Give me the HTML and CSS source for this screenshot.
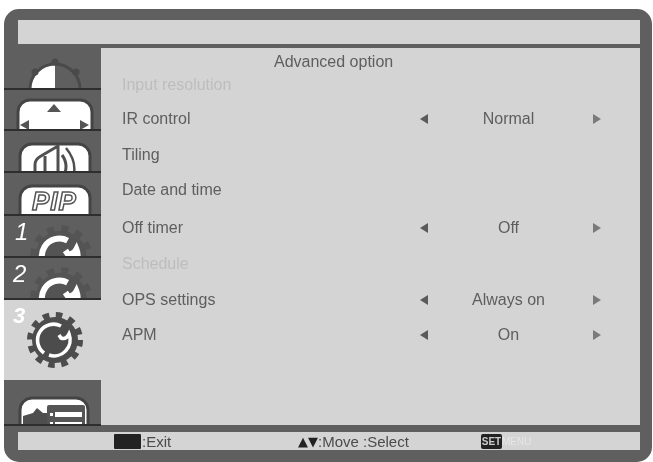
FILE: index.html
```html
<!DOCTYPE html>
<html lang="en">
  <head>
    <meta charset="UTF-8" />
    <meta name="viewport" content="width=device-width, initial-scale=1.0" />
    <title>Advanced option</title>
    <link rel="stylesheet" href="styles.css">
  </head>
  <body>
    <svg class="defs" width="0" height="0">
      <!-- gear body: dashed ring makes the teeth -->
      <symbol id="gear" viewBox="0 0 60 60">
        <circle class="gear-body" cx="30" cy="30" r="23" />
        <circle class="gear-teeth" cx="30" cy="30" r="25" stroke-dasharray="6.5 6.6" />
        <g class="wrench">
          <path d="M36 16A16 16 0 0 0 19 43" />
          <path d="M24 45A16 16 0 0 0 44 24q-3 6-8 4l-2-3" />
        </g>
      </symbol>
    </svg>
    <div class="osd">
      <div class="title-bar"></div>
      <div class="main">
        <div class="sidebar">
          <div class="tab tab-1">
            <svg class="icon" width="96" height="40" viewBox="0 0 96 40">
              <path d="M26 41a25 25 0 0 1 25-25v25z" fill="#fff" />
              <path d="M26 41a25 25 0 0 1 50 0" fill="none" stroke="#4a4a4a" stroke-width="3" />
              <circle cx="51" cy="14" r="3.5" fill="#4a4a4a" />
              <circle cx="31" cy="24" r="3.5" fill="#4a4a4a" />
              <circle cx="72" cy="24" r="3.5" fill="#4a4a4a" />
            </svg>
          </div>
          <div class="tab tab-2">
            <svg class="icon" width="96" height="40" viewBox="0 0 96 40">
              <rect x="14" y="10" width="74" height="50" rx="12" fill="#fff" stroke="#444" stroke-width="3" />
              <path d="M50 14l7 8h-14z M16 35l9-5v10z M85 35l-9-5v10z" fill="#555" />
            </svg>
          </div>
          <div class="tab tab-3">
            <svg class="icon" width="96" height="41" viewBox="0 0 96 41">
              <rect x="16" y="13" width="70" height="50" rx="12" fill="#fff" stroke="#444" stroke-width="3" />
              <g fill="none" stroke="#505050" stroke-width="3">
                <path d="M31 42v-8q0-6 6-9l17-10v27" />
                <path d="M41 42v-17" />
                <path d="M58 24q6 8 3 18" />
                <path d="M62 17q10 12 8 25" stroke-width="2.5" />
              </g>
            </svg>
          </div>
          <div class="tab tab-4">
            <svg class="icon" width="96" height="42" viewBox="0 0 96 42">
              <rect x="16" y="13" width="70" height="50" rx="12" fill="#fff" stroke="#444" stroke-width="3" />
            </svg>
            <span class="pip">PIP</span>
          </div>
          <div class="tab tab-5">
            <span class="num">1</span>
            <svg class="gear" width="66" height="66"><use href="#gear" width="66" height="66" /></svg>
          </div>
          <div class="tab tab-6">
            <span class="num">2</span>
            <svg class="gear" width="66" height="66"><use href="#gear" width="66" height="66" /></svg>
          </div>
          <div class="tab tab-7 active">
            <span class="num">3</span>
            <svg class="gear" width="60" height="60"><use href="#gear" width="60" height="60" /></svg>
          </div>
          <div class="tab tab-8">
            <svg class="icon" width="96" height="44" viewBox="0 0 96 44">
              <rect x="16" y="18" width="68" height="50" rx="12" fill="#fff" stroke="#444" stroke-width="3" />
              <path d="M19 45v-9l10-3 4-5 6 5h4v12z" fill="#4e4e4e" />
              <rect x="43" y="25" width="38" height="24" rx="2" fill="#555" />
              <rect x="51" y="32" width="27" height="5" fill="#fff" />
              <rect x="51" y="42" width="27" height="3" fill="#fff" />
              <rect x="46" y="33" width="3" height="3" fill="#fff" />
              <rect x="46" y="42" width="3" height="3" fill="#fff" />
            </svg>
          </div>
        </div>
        <div class="panel">
          <div class="panel-title">Advanced option</div>
          <div class="rows">
            <div class="row disabled"><span>Input resolution</span></div>
            <div class="row">
              <span>IR control</span>
              <i class="arrow-left"></i><span class="value">Normal</span><i class="arrow-right"></i>
            </div>
            <div class="row"><span>Tiling</span></div>
            <div class="row"><span>Date and time</span></div>
            <div class="row">
              <span>Off timer</span>
              <i class="arrow-left"></i><span class="value">Off</span><i class="arrow-right"></i>
            </div>
            <div class="row disabled"><span>Schedule</span></div>
            <div class="row">
              <span>OPS settings</span>
              <i class="arrow-left"></i><span class="value">Always on</span><i class="arrow-right"></i>
            </div>
            <div class="row">
              <span>APM</span>
              <i class="arrow-left"></i><span class="value">On</span><i class="arrow-right"></i>
            </div>
          </div>
        </div>
      </div>
      <div class="footer">
        <div class="hint hint-exit"><b class="key"></b><span>:Exit</span></div>
        <div class="hint hint-move"><span class="tri">▲▼</span><span>:Move :Select</span></div>
        <div class="hint hint-set"><b class="key-set">SET</b><span class="faint">MENU</span></div>
      </div>
    </div>
  </body>
</html>
```

FILE: styles.css
```css
* {
  box-sizing: border-box;
}

body {
  margin: 0;
  height: 462px;
  background-color: #fff;
  font-family: "Liberation Sans", Arial, sans-serif;
  overflow: hidden;
}

.defs {
  display: block;
}

.osd {
  width: 648px;
  height: 453px;
  margin: 9px 0 0 4px;
  padding: 11px 12px 0 0;
  background-color: #5f5f5f;
  border-radius: 15px;
  filter: blur(0.5px);
}

.title-bar {
  height: 24px;
  margin-left: 14px;
  background-color: #d4d4d4;
}

.main {
  display: flex;
  height: 378px;
  margin-top: 4px;
}

.sidebar {
  width: 97px;
  display: flex;
  flex-direction: column;
}

.tab {
  position: relative;
  overflow: hidden;
  border-bottom: 2px solid #2e2e2e;
}

.tab-1 { height: 42px; }
.tab-2 { height: 41px; }
.tab-3 { height: 42px; }
.tab-4 { height: 43px; }
.tab-5 { height: 42px; }
.tab-6 { height: 42px; }
.tab-8 { height: 46px; }

.tab-7 {
  height: 80px;
  border-bottom: 0;
}

.tab.active {
  background-color: #d4d4d4;
  border-top: 2px solid #d4d4d4;
}

.icon {
  display: block;
}

.gear {
  position: absolute;
  left: 24px;
  top: 7px;
  --gear-fill: #545454;
  --ring: 5.5px;
}

.active .gear {
  left: 21px;
  top: 8px;
  --gear-fill: #4c4c4c;
  --ring: 3.6px;
}

.gear-body {
  fill: var(--gear-fill);
}

.gear-teeth {
  fill: none;
  stroke: var(--gear-fill);
  stroke-width: 6px;
}

.wrench {
  fill: none;
  stroke: #fff;
  stroke-width: var(--ring);
}

.num {
  position: absolute;
  left: 11px;
  top: 2px;
  z-index: 1;
  color: #fff;
  font-size: 24px;
  font-style: italic;
}

.tab-6 .num {
  left: 9px;
}

.active .num {
  left: 9px;
  top: 1px;
  font-size: 22px;
  font-weight: bold;
}

.pip {
  position: absolute;
  left: 28px;
  top: 13px;
  color: #fff;
  font-size: 26px;
  font-weight: bold;
  font-style: italic;
  letter-spacing: 1px;
  -webkit-text-stroke: 1.5px #555;
}

.panel {
  flex: 1;
  height: 377px;
  padding: 6px 0 0 21px;
  background-color: #d4d4d4;
  color: #5e5e5e;
  font-size: 16px;
}

.panel-title {
  height: 16px;
  margin-left: 152px;
  line-height: 16px;
}

.rows {
  display: grid;
  grid-template-rows: 30px 38px 34px 36px 40px 32px 40px 30px;
}

.row {
  display: grid;
  grid-template-columns: 292px 20px 149px 28px;
  align-items: center;
}

.disabled {
  color: #bdbdbd;
}

.value {
  text-align: center;
}

.arrow-left,
.arrow-right {
  display: block;
  justify-self: center;
  border-top: 5px solid transparent;
  border-bottom: 5px solid transparent;
}

.arrow-left {
  border-right: 8px solid #5a5a5a;
}

.arrow-right {
  border-left: 8px solid #7a7a7a;
}

.footer {
  display: flex;
  height: 18px;
  margin: 6px 0 0 14px;
  background-color: #d4d4d4;
  color: #4a4a4a;
  font-size: 15px;
  line-height: 18px;
}

.hint {
  display: flex;
  align-items: center;
}

.hint span {
  padding-top: 1px;
}

.hint-exit {
  width: 280px;
  padding-left: 96px;
}

.hint-move {
  width: 183px;
}

.key {
  width: 27px;
  height: 15px;
  margin-right: 1px;
  background-color: #222;
  border-radius: 1px;
}

.tri {
  width: 20px;
  font-family: "DejaVu Sans", sans-serif;
  font-size: 13px;
  white-space: nowrap;
  color: #222;
}

.key-set {
  width: 21px;
  height: 15px;
  background-color: #222;
  border-radius: 2px;
  color: #ccc;
  font-size: 10px;
  line-height: 15px;
  text-align: center;
}

.faint {
  color: #e6e6e6;
  font-size: 10px;
}
```
